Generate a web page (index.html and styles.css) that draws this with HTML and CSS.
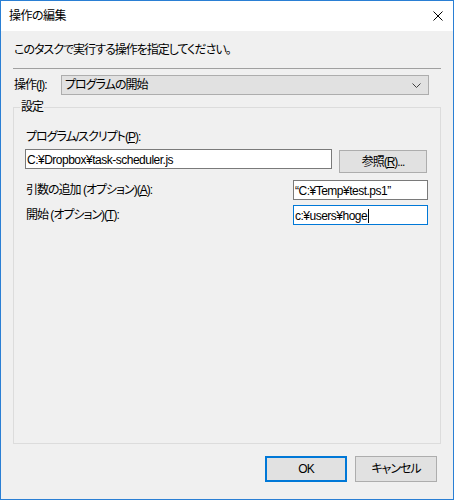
FILE: index.html
```html
<!DOCTYPE html>
<html lang="ja">
<head>
  <meta charset="UTF-8">
  <title>操作の編集</title>
  <link rel="stylesheet" href="styles.css">
</head>
<body>

  <div class="window">
    <!-- title bar -->
    <div class="titlebar">
      <span class="title">操作の編集</span>
      <svg class="close" width="10" height="10" viewBox="0 0 10 10">
        <path d="M0.5 0.5 L9.5 9.5 M9.5 0.5 L0.5 9.5" stroke="#000" stroke-width="1" fill="none"/>
      </svg>
    </div>

    <div class="content">
      <div class="intro">このタスクで実行する操作を指定してください。</div>
      <div class="separator"></div>

      <div class="action-row">
        <label>操作(<u>I</u>):</label>
        <div class="select">
          <span>プログラムの開始</span>
          <svg class="chevron" width="9" height="5" viewBox="0 0 9 5">
            <path d="M0.5 0.5 L4.5 4.5 L8.5 0.5" stroke="#404040" stroke-width="1" fill="none"/>
          </svg>
        </div>
      </div>

      <fieldset class="group">
        <legend>設定</legend>

        <div class="field-label">プログラム/スクリプト(<u>P</u>):</div>
        <div class="program-row">
          <div class="textbox wide">C:¥Dropbox¥task-scheduler.js</div>
          <div class="button browse">参照(<u>R</u>)...</div>
        </div>

        <div class="option-row">
          <label>引数の追加 (オプション)(<u>A</u>):</label>
          <div class="textbox narrow">“C:¥Temp¥test.ps1”</div>
        </div>
        <div class="option-row">
          <label>開始 (オプション)(<u>T</u>):</label>
          <div class="textbox narrow focused">c:¥users¥hoge<span class="caret"></span></div>
        </div>
      </fieldset>

      <div class="buttons">
        <div class="button default">OK</div>
        <div class="button">キャンセル</div>
      </div>
    </div>
  </div>

</body>
</html>
```

FILE: styles.css
```css
* {
  box-sizing: border-box;
}
body {
  margin: 0;
  font-family: "Liberation Sans", "Noto Sans CJK JP", sans-serif;
  font-size: 12px;
  line-height: 16px;
  font-feature-settings: "palt";
  letter-spacing: -1px;
  color: #000;
}
u {
  text-underline-offset: 1px;
}
.window {
  width: 454px;
  height: 500px;
  border: 1px solid #2a7fd4;
  background: #f0f0f0;
  display: flex;
  flex-direction: column;
}
.titlebar {
  height: 30px;
  background: #fff;
  display: flex;
  align-items: center;
  justify-content: space-between;
  padding: 0 10px 1px 8px;
}
.title {
  letter-spacing: -0.5px;
}
.close {
  display: block;
}
.content {
  flex: 1;
  display: flex;
  flex-direction: column;
  padding: 0 12px;
}
.intro {
  margin-top: 11px;
  padding-left: 1px;
}
.separator {
  margin-top: 10px;
  height: 1px;
  background: #a0a0a0;
}
.action-row {
  margin-top: 6px;
  display: flex;
  align-items: center;
}
.action-row label {
  width: 48px;
  padding-left: 1px;
}
.select {
  width: 368px;
  height: 20px;
  background: #e1e1e1;
  border: 1px solid #adadad;
  padding: 0 7px 0 3px;
  display: flex;
  align-items: center;
  justify-content: space-between;
}
.chevron {
  display: block;
  margin-top: 1px;
}
.group {
  flex: 1;
  margin: 4px 0 0 0;
  padding: 0 12px 0 11px;
  border: 1px solid #dcdcdc;
  min-width: 0;
}
.group legend {
  margin-left: -5px;
  padding: 0 1px;
}
.field-label {
  margin-top: 14px;
  padding-left: 1px;
}
.program-row {
  margin-top: 4px;
  display: flex;
  align-items: flex-start;
}
.textbox {
  height: 20px;
  background: #fff;
  border: 1px solid #7a7a7a;
  padding: 1px 1px 0 1px;
  white-space: nowrap;
  letter-spacing: -0.5px;
  display: flex;
  align-items: center;
}
.textbox.wide {
  width: 307px;
}
.textbox.narrow {
  width: 135px;
}
.textbox.focused {
  border-color: #0078d7;
}
.caret {
  width: 1px;
  height: 14px;
  background: #000;
  margin-left: 1px;
}
.button {
  display: flex;
  align-items: center;
  justify-content: center;
  background: #e1e1e1;
  border: 1px solid #adadad;
}
.browse {
  margin: 1px 1px 0 7px;
  width: 88px;
  height: 23px;
}
.option-row {
  margin-top: 7px;
  display: flex;
  align-items: center;
  justify-content: space-between;
}
.option-row + .option-row {
  margin-top: 5px;
}
.option-row label {
  padding-left: 1px;
}
.buttons {
  margin: 12px 4px 17px 0;
  display: flex;
  justify-content: flex-end;
  gap: 8px;
}
.buttons .button {
  width: 82px;
  height: 26px;
}
.buttons .button.default {
  border: 2px solid #0078d7;
}
```
